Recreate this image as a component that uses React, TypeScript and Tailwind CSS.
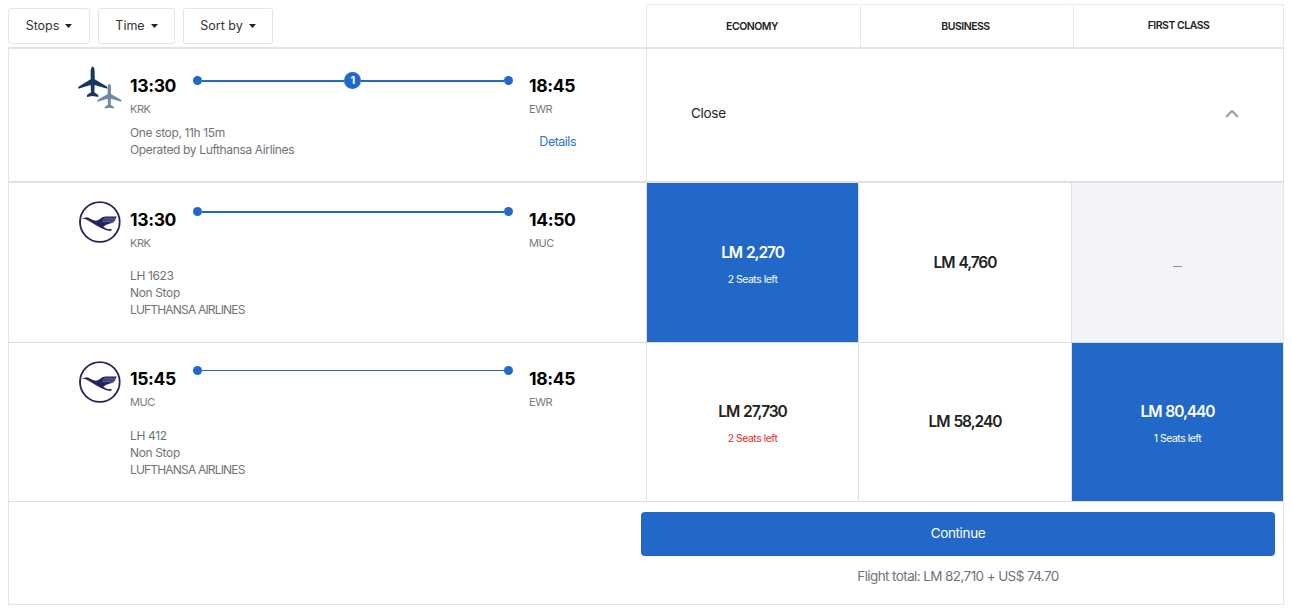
import React from "react";

type Fare = { price?: string; seats?: string; selected?: boolean };

const PLANE =
  "M68 34Q74 38 74 48V73L112 95V101L74 90L73 112L85 120V126L68 123L51 126V120L63 112L62 90L25 101V95L62 73V48Q62 38 68 34Z";

function Planes() {
  return (
    <svg width="44" height="44" viewBox="24 33 132 132" className="mt-[17px]">
      <path fill="#17375f" d={PLANE} />
      <path fill="#7488a3" transform="translate(61.5 57.3) scale(.83 .82)" d={PLANE} />
    </svg>
  );
}

function Crane() {
  return (
    <svg width="42" height="42" viewBox="26 63 126 126" className="mt-[18px] ml-[1px]">
      <circle cx="88.5" cy="126" r="59.5" fill="#fff" stroke="#25245f" strokeWidth="5.5" />
      <path
        fill="#25245f"
        d="M34 115L44 113Q50 110 56 114Q65 120 76 122Q84 121 90 116Q96 110 106 109.500H140L136 114L138 116L134 119L135 121L131 124L132 126L122 130L112 133Q105 135 99 140L110 147L125 148L122 153L108 151Q90 144 77 136Q64 128 52 121Q45 117 34 115Z"
      />
      <path d="M100 115H136M97 120H134M96 125H131" stroke="#fff" strokeWidth="1.500" opacity=".6" />
    </svg>
  );
}

function Filter({ label, className }: { label: string; className: string }) {
  return (
    <button
      className={`flex h-[36px] items-center justify-center rounded-[3px] border border-[#e4e4e4] text-[12.5px] text-[#333] ${className}`}
    >
      {label}
      <svg width="7" height="4" viewBox="0 0 7 4" className="ml-[6px]">
        <path d="M0 0H7L3.5 4Z" fill="#222" />
      </svg>
    </button>
  );
}

function Track({ stops, className = "", line }: { stops?: string; className?: string; line: string }) {
  return (
    <div className={`flex h-[17px] w-[320.5px] items-center ${className}`}>
      <span className="size-[9px] rounded-full bg-[#2268c8]" />
      <span className={`flex-1 bg-[#2268c8] ${line}`} />
      {stops && (
        <>
          <span className="flex size-[17px] items-center justify-center rounded-full bg-[#2268c8] text-[11px] font-bold text-white">
            {stops}
          </span>
          <span className={`flex-1 bg-[#2268c8] ${line}`} />
        </>
      )}
      <span className="size-[9px] rounded-full bg-[#2268c8]" />
    </div>
  );
}

function Place({ time, code, className = "" }: { time: string; code: string; className?: string }) {
  return (
    <div className={className}>
      <div className="h-6 pt-px text-[17.5px] leading-6 font-bold tracking-[-0.35px] whitespace-nowrap text-black">{time}</div>
      <div className="mt-[5px] h-[15px] text-[11px] leading-[15px] tracking-[-0.45px] text-[#777b80]">{code}</div>
    </div>
  );
}

type LegProps = {
  icon: React.ReactNode;
  from: [string, string];
  to: [string, string];
  stops?: string;
  lines: string[];
  details?: boolean;
  top?: string;
  trackClass: string;
  line: string;
  gap: string;
};

function Leg({ icon, from, to, stops, lines, details, top = "pt-[24px]", trackClass, line, gap }: LegProps) {
  return (
    <div className="flex w-[637px] shrink-0 pl-[69px]">
      <div className="w-[52px] shrink-0">{icon}</div>
      <div className={`w-[447px] ${top}`}>
        <div className="flex">
          <Place time={from[0]} code={from[1]} className="w-[62.5px]" />
          <Track stops={stops} className={trackClass} line={line} />
          <Place time={to[0]} code={to[1]} className="ml-[16px]" />
        </div>
        <div className={`flex justify-between text-[12px] leading-[17px] tracking-[-0.36px] text-[#6f7378] ${gap}`}>
          <div>
            {lines.map((l) => (
              <div key={l} className={l === l.toUpperCase() && l.length > 10 ? "tracking-[-0.82px]" : ""}>
                {l}
              </div>
            ))}
          </div>
          {details && <a className="mt-[9px] mr-[1px] text-[12.5px] tracking-[-0.5px] text-[#2f70cf]">Details</a>}
        </div>
      </div>
    </div>
  );
}

function FareCell({ fare, width = "w-[212px]" }: { fare: Fare; width?: string }) {
  const tone = fare.selected ? "bg-[#2268c8] text-white" : fare.price ? "bg-white text-[#222]" : "bg-[#f3f4f7] text-[#888]";
  return (
    <div className={`flex shrink-0 flex-col items-center justify-center border-l border-[#e0e0e0] ${width} ${tone}`}>
      {fare.price ? (
        <span className="text-[15.5px] leading-6 font-semibold tracking-[-1.05px] [word-spacing:1px]">{fare.price}</span>
      ) : (
        <span className="mt-[8px] h-px w-[9px] bg-[#909295]" />
      )}
      {fare.seats && (
        <span
          className={`mt-[7px] -mb-[3px] text-[10.5px] leading-4 tracking-[-0.5px] ${fare.selected ? "text-white" : "text-[#d8302f]"}`}
        >
          {fare.seats}
        </span>
      )}
    </div>
  );
}

export default function App() {
  return (
    <div className="h-[612px] w-[1292px] overflow-hidden bg-white pl-2 font-['Inter',sans-serif]">
      <div className="flex h-[47px] w-[1276px]">
        <div className="flex w-[638px] shrink-0 gap-[8px] pt-[8px]">
          <Filter label="Stops" className="w-[82px]" />
          <Filter label="Time" className="w-[77px]" />
          <Filter label="Sort by" className="w-[90px]" />
        </div>
        <div className="flex flex-1 gap-[2px] pt-[4px] text-[10.5px] font-semibold tracking-[-0.5px] text-[#222]">
          <div className="flex w-[212px] items-center justify-center border-t border-l border-[#e8e8e8] pt-px pr-px">ECONOMY</div>
          <div className="flex w-[211px] items-center justify-center border-t border-l border-[#e8e8e8] pt-px pr-px">BUSINESS</div>
          <div className="flex flex-1 items-center justify-center border-x border-t border-[#e8e8e8]">FIRST CLASS</div>
        </div>
      </div>
      <div className="h-[558px] w-[1276px] border border-t-2 border-[#e4e4e4]">
        <div className="flex h-[134px] border-b-2 border-[#e0e0e0]">
          <Leg
            icon={<Planes />}
            from={["13:30", "KRK"]}
            to={["18:45", "EWR"]}
            stops="1"
            lines={["One stop, 11h 15m", "Operated by Lufthansa Airlines"]}
            details
            trackClass="mt-[-1px]"
            line="h-[2px]"
            gap="mt-[7px]"
          />
          <div className="flex flex-1 items-center justify-between border-l border-[#e4e4e4] pr-[44px] pb-[3px] pl-[44px] text-[13.5px] tracking-[-0.3px] text-[#222]">
            <span>Close</span>
            <svg width="14" height="9" viewBox="0 0 14 9" className="-mt-px">
              <path d="M1 8L7 2L13 8" fill="none" stroke="#a0a0a0" strokeWidth="2.2" />
            </svg>
          </div>
        </div>
        <div className="flex h-[160px] border-b border-[#dcdcdc]">
          <Leg
            icon={<Crane />}
            from={["13:30", "KRK"]}
            to={["14:50", "MUC"]}
            lines={["LH 1623", "Non Stop", "LUFTHANSA AIRLINES"]}
            trackClass="mt-[-4px]"
            line="h-[2px]"
            gap="mt-[16px]"
          />
          <FareCell fare={{ price: "LM 2,270", seats: "2 Seats left", selected: true }} />
          <FareCell fare={{ price: "LM 4,760" }} width="w-[213px]" />
          <FareCell fare={{}} />
        </div>
        <div className="flex h-[159px] border-b border-[#e0e0e0]">
          <Leg
            icon={<Crane />}
            from={["15:45", "MUC"]}
            to={["18:45", "EWR"]}
            lines={["LH 412", "Non Stop", "LUFTHANSA AIRLINES"]}
            top="pt-[23px]"
            trackClass="mt-[-4px]"
            line="h-[1.4px]"
            gap="mt-[17px]"
          />
          <FareCell fare={{ price: "LM 27,730", seats: "2 Seats left" }} />
          <FareCell fare={{ price: "LM 58,240" }} width="w-[213px]" />
          <FareCell fare={{ price: "LM 80,440", seats: "1 Seats left", selected: true }} />
        </div>
        <div className="ml-[632px] flex w-[634px] flex-col items-center pt-[10px]">
          <button className="h-[44px] w-full rounded-[4px] bg-[#2268c8] pb-[2px] text-[13.5px] tracking-[-0.35px] text-white">
            Continue
          </button>
          <div className="mt-[10px] text-[13.5px] leading-5 tracking-[-0.6px] text-[#6f7378]">
            Flight total: LM 82,710 + US$ 74.70
          </div>
        </div>
      </div>
    </div>
  );
}
